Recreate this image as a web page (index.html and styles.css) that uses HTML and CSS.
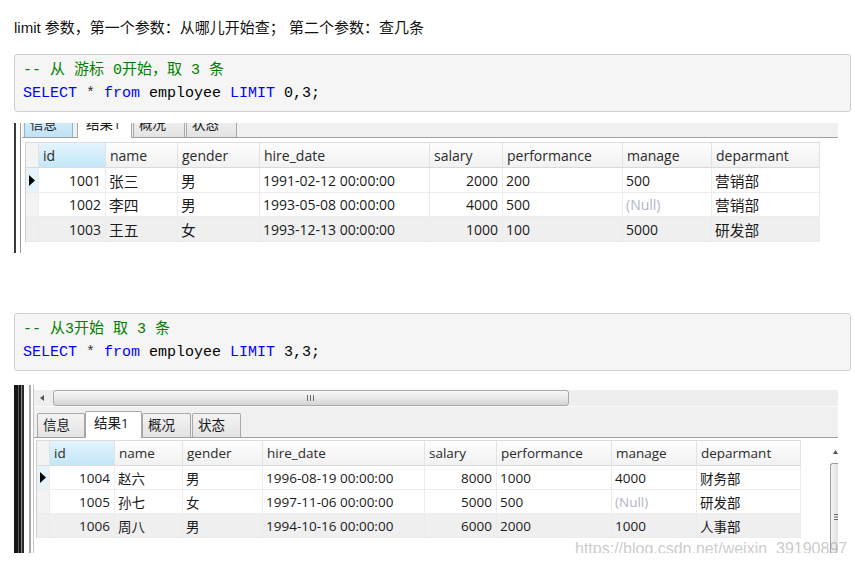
FILE: index.html
```html
<!DOCTYPE html>
<html lang="zh-CN">
<head>
<meta charset="utf-8">
<title>limit</title>
<link rel="stylesheet" href="styles.css">
</head>
<body>
<div class="page">
  <p class="intro">limit 参数，第一个参数：从哪儿开始查； 第二个参数：查几条</p>
  <pre class="code"><span class="cm">-- 从 游标 0开始，取 3 条</span>
<span class="kw">SELECT</span> <span class="op">*</span> <span class="kw">from</span> employee <span class="kw">LIMIT</span> 0,3;</pre>

  <div class="shot shot1">
    <div class="edge1"></div>
    <div class="panel">
      <div class="tabs">
        <div class="tab hover t1">信息</div>
        <div class="tab sel t2">结果1</div>
        <div class="tab t3">概况</div>
        <div class="tab t4">状态</div>
      </div>
      <div class="gridarea">
        <div class="grid">
          <div class="row hd">
            <div class="cell ind"></div><div class="cell idh">id</div><div class="cell">name</div><div class="cell">gender</div><div class="cell">hire_date</div><div class="cell">salary</div><div class="cell">performance</div><div class="cell">manage</div><div class="cell">deparmant</div>
          </div>
          <div class="row">
            <div class="cell ind cur"><svg class="tri" width="6" height="11" viewBox="0 0 6 11"><polygon points="0,0 6,5.5 0,11" fill="#000"/></svg></div><div class="cell num">1001</div><div class="cell"><span class="zh">张三</span></div><div class="cell"><span class="zh">男</span></div><div class="cell">1991-02-12 00:00:00</div><div class="cell num">2000</div><div class="cell">200</div><div class="cell">500</div><div class="cell"><span class="zh">营销部</span></div>
          </div>
          <div class="row">
            <div class="cell ind"></div><div class="cell num">1002</div><div class="cell"><span class="zh">李四</span></div><div class="cell"><span class="zh">男</span></div><div class="cell">1993-05-08 00:00:00</div><div class="cell num">4000</div><div class="cell">500</div><div class="cell null">(Null)</div><div class="cell"><span class="zh">营销部</span></div>
          </div>
          <div class="row alt">
            <div class="cell ind"></div><div class="cell num">1003</div><div class="cell"><span class="zh">王五</span></div><div class="cell"><span class="zh">女</span></div><div class="cell">1993-12-13 00:00:00</div><div class="cell num">1000</div><div class="cell">100</div><div class="cell">5000</div><div class="cell"><span class="zh">研发部</span></div>
          </div>
        </div>
      </div>
    </div>
  </div>

  <pre class="code code2"><span class="cm">-- 从3开始 取 3 条</span>
<span class="kw">SELECT</span> <span class="op">*</span> <span class="kw">from</span> employee <span class="kw">LIMIT</span> 3,3;</pre>

  <div class="shot2wrap">
    <div class="shot shot2">
      <div class="edge2"></div>
      <div class="panel panel2">
        <div class="topband"></div>
        <div class="hscroll">
          <div class="hbtn"><svg width="4" height="6" viewBox="0 0 4 6"><polygon points="4,0 0,3 4,6" fill="#555"/></svg></div>
          <div class="hthumb"><svg width="8" height="6" viewBox="0 0 8 6"><rect x="0" y="0" width="1" height="6" fill="#6a6a6a"/><rect x="3" y="0" width="1" height="6" fill="#6a6a6a"/><rect x="6" y="0" width="1" height="6" fill="#6a6a6a"/></svg></div>
        </div>
        <div class="tabs">
          <div class="tab t1">信息</div>
          <div class="tab sel t2">结果1</div>
          <div class="tab t3">概况</div>
          <div class="tab t4">状态</div>
        </div>
        <div class="gridarea">
          <div class="grid">
            <div class="row hd">
              <div class="cell ind"></div><div class="cell idh">id</div><div class="cell">name</div><div class="cell">gender</div><div class="cell">hire_date</div><div class="cell">salary</div><div class="cell">performance</div><div class="cell">manage</div><div class="cell">deparmant</div>
            </div>
            <div class="row">
              <div class="cell ind cur"><svg class="tri" width="6" height="11" viewBox="0 0 6 11"><polygon points="0,0 6,5.5 0,11" fill="#000"/></svg></div><div class="cell num">1004</div><div class="cell"><span class="zh">赵六</span></div><div class="cell"><span class="zh">男</span></div><div class="cell">1996-08-19 00:00:00</div><div class="cell num">8000</div><div class="cell">1000</div><div class="cell">4000</div><div class="cell"><span class="zh">财务部</span></div>
            </div>
            <div class="row">
              <div class="cell ind"></div><div class="cell num">1005</div><div class="cell"><span class="zh">孙七</span></div><div class="cell"><span class="zh">女</span></div><div class="cell">1997-11-06 00:00:00</div><div class="cell num">5000</div><div class="cell">500</div><div class="cell null">(Null)</div><div class="cell"><span class="zh">研发部</span></div>
            </div>
            <div class="row alt">
              <div class="cell ind"></div><div class="cell num">1006</div><div class="cell"><span class="zh">周八</span></div><div class="cell"><span class="zh">男</span></div><div class="cell">1994-10-16 00:00:00</div><div class="cell num">6000</div><div class="cell">2000</div><div class="cell">1000</div><div class="cell"><span class="zh">人事部</span></div>
            </div>
          </div>
          <div class="vscroll">
            <div class="varrow"><svg width="5" height="4" viewBox="0 0 5 4"><polygon points="0,4 2.5,0 5,4" fill="#555"/></svg></div>
            <div class="vthumb"><svg width="6" height="6" viewBox="0 0 6 6"><rect x="0" y="0" width="6" height="1" fill="#6a6a6a"/><rect x="0" y="2.5" width="6" height="1" fill="#6a6a6a"/><rect x="0" y="5" width="6" height="1" fill="#6a6a6a"/></svg></div>
          </div>
        </div>
      </div>
    </div>
    <div class="wm">https://blog.csdn.net/weixin_39190897</div>
  </div>
</div>
</body>
</html>
```

FILE: styles.css
```css
* { box-sizing: border-box; }

body {
  margin: 0;
  background: #fff;
}

.page {
  padding: 19px 4px 0 14px;
  font-family: "Liberation Sans", "Noto Sans CJK SC", sans-serif;
}

.intro {
  margin: 0;
  font-size: 15px;
  line-height: 17px;
  color: #111;
}

.code {
  margin: 18px 0 0;
  height: 58px;
  border: 1px solid #cfcfcf;
  border-radius: 3px;
  background: #f5f5f5;
  padding: 4px 8px 0;
  font-family: "Liberation Mono", "Noto Sans CJK SC", monospace;
  font-size: 15px;
  line-height: 23px;
  color: #000;
  white-space: pre;
  overflow: hidden;
}

.code2 { margin-top: 60px; }

.cm { color: #008000; }
.kw { color: #0000ff; }
.op { color: #333; }

/* ---------- screenshots ---------- */
.shot {
  display: flex;
  width: 824px;
  overflow: hidden;
  font-family: "Open Sans", "Noto Sans CJK SC", sans-serif;
  color: #1a1a1a;
}

.shot1 {
  height: 130px;
  margin-top: 11px;
}

.edge1 {
  width: 8px;
  flex: none;
  background: linear-gradient(to right, #3a3a3a 0 2px, #fff 2px 6px, #9a9a9a 6px 7px, #fff 7px);
}

.panel {
  flex: 1;
  min-width: 0;
  display: flex;
  flex-direction: column;
}

.tabs {
  flex: none;
  display: flex;
  align-items: flex-end;
  background: #f0f0f0;
  border-bottom: 1px solid #a0a0a0;
}

.tab {
  flex: none;
  border: 1px solid #a8a8a8;
  border-bottom: none;
  border-radius: 2px 2px 0 0;
  background: linear-gradient(#f3f3f3, #e3e3e3);
  padding-left: 5px;
  white-space: nowrap;
  color: #1a1a1a;
}

.tab.sel {
  background: #fff;
  margin-bottom: -1px;
  position: relative;
  padding-left: 8px;
}

.tab.hover {
  background: linear-gradient(#dcf0fb, #bfe2f4);
  border-color: #8ab8d2;
}

/* shot 1 tabs (cut off at top, as in the capture) */
.shot1 .tabs {
  height: 15px;
  padding-left: 2px;
}
.shot1 .tab {
  height: 24px;
  line-height: 20px;
  font-size: 13.5px;
}
.shot1 .tab.sel { height: 25px; }
.shot1 .t1 { width: 49px; }
.shot1 .t2 { width: 55px; margin-left: 4px; }
.shot1 .t3 { width: 52px; margin-left: 1px; }
.shot1 .t4 { width: 51px; margin-left: 1px; }

/* shot 2 tabs */
.shot2 .tabs {
  height: 31px;
  padding-left: 3px;
}
.shot2 .tab {
  height: 24px;
  line-height: 23px;
  font-size: 13.5px;
}
.shot2 .tab.sel {
  height: 27px;
  line-height: 22px;
}
.shot2 .t1 { width: 48px; }
.shot2 .t2 { width: 57px; }
.shot2 .t3 { width: 49px; }
.shot2 .t4 { width: 49px; margin-left: 1px; }

/* grid */
.gridarea {
  flex: 1;
  display: flex;
  background: #fff;
}
.shot1 .gridarea { padding: 4px 0 0 3px; }
.shot2 .gridarea { padding: 2px 0 0 2px; }

.grid {
  display: grid;
  align-self: flex-start;
  border-top: 1px solid #dcdcdc;
  border-left: 1px solid #cfcfcf;
}
.shot1 .grid {
  grid-template-columns: 13px 67px 72px 82px 170px 73px 120px 89px 108px;
  grid-template-rows: 25px 25px 24px 25px;
}
.shot2 .grid {
  grid-template-columns: 13px 65px 68px 80px 162px 72px 115px 85px 104px;
  grid-template-rows: 25px 24px 24px 24px;
}

.row { display: contents; }

.cell {
  display: flex;
  align-items: center;
  padding: 0 3px;
  border-right: 1px solid #ececec;
  border-bottom: 1px solid #ececec;
  white-space: nowrap;
  overflow: hidden;
  background: #fff;
}
.shot1 .cell { font-size: 14px; }
.shot2 .cell { font-size: 13.5px; }

.hd .cell {
  background: linear-gradient(#fdfdfd, #f1f1f1);
  border-right-color: #e2e2e2;
  border-bottom-color: #dadada;
  padding-left: 4px;
  color: #2a2a2a;
}
.shot1 .hd .cell { font-size: 14px; }
.shot2 .hd .cell { font-size: 13.5px; }
.hd .cell.idh { background: linear-gradient(#e3f4fd, #c3e6f8); }

.cell.ind {
  padding: 0;
  justify-content: center;
  background: #f3f3f3;
}
.cell.cur { background: #e7f3fb; }

.num {
  justify-content: flex-end;
  padding-right: 4px;
}

.alt .cell { background: #efefef; }

.null { color: #b1b5ca; }

.shot1 .zh { font-size: 1.05em; }
.shot2 .zh { font-size: 1em; }

/* shot 2 */
.shot2wrap {
  position: relative;
  margin-top: 14px;
}

.shot2 { height: 168px; }

.edge2 {
  width: 19px;
  flex: none;
  background: linear-gradient(to right, #151515 0 4px, #5a5a5a 4px 5px, #151515 5px 7px, #8a8a8a 7px 8px, #2a2a2a 8px 10px, #fff 10px 15px, #a8a8a8 15px 17px, #fff 17px);
}

.panel2 { border-left: 1px solid #c4c4c4; }

.topband {
  flex: none;
  height: 5px;
  background: #fff;
}

.hscroll {
  flex: none;
  height: 17px;
  display: flex;
  background: #eeeeee;
  border-bottom: 1px solid #fafafa;
}

.hbtn {
  width: 19px;
  flex: none;
  display: flex;
  align-items: center;
  padding-left: 6px;
}

.hthumb {
  width: 516px;
  height: 16px;
  flex: none;
  border: 1px solid #a9a9a9;
  border-radius: 3px;
  background: linear-gradient(#f8f8f8, #e8e8e8 50%, #d4d4d4);
  display: flex;
  align-items: center;
  justify-content: center;
}

.vscroll {
  width: 8px;
  flex: none;
  margin-left: auto;
  display: flex;
  flex-direction: column;
}

.varrow {
  height: 23px;
  display: flex;
  align-items: center;
  padding-left: 3px;
}

.vthumb {
  flex: 1;
  border-left: 1px solid #9c9c9c;
  border-top: 1px solid #9c9c9c;
  border-top-left-radius: 3px;
  background: linear-gradient(to right, #f4f4f4, #e2e2e2);
  padding: 50px 0 0 3px;
}

.vthumb svg { display: block; }

.wm {
  position: absolute;
  left: 561px;
  top: 154px;
  font-family: "Liberation Sans", sans-serif;
  font-size: 16px;
  line-height: 20px;
  color: rgba(150, 150, 150, 0.5);
  white-space: nowrap;
}
```
